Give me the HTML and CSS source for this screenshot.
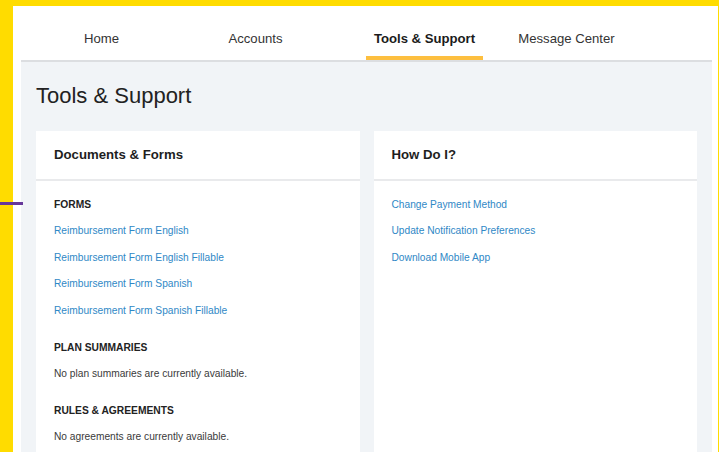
FILE: index.html
```html
<!DOCTYPE html>
<html lang="en">
<head>
<meta charset="utf-8">
<title>Tools &amp; Support</title>
<link rel="stylesheet" href="styles.css">
</head>
<body>
<span class="edge-marker"></span>
<div class="frame">
  <nav class="tabs">
    <a class="tab tab-home" href="#">Home</a>
    <a class="tab tab-accounts" href="#">Accounts</a>
    <a class="tab tab-tools is-active" href="#">Tools &amp; Support</a>
    <a class="tab tab-messages" href="#">Message Center</a>
  </nav>
  <main class="content">
    <h1 class="page-title">Tools &amp; Support</h1>
    <div class="cards">
      <section class="card">
        <h2 class="card-head">Documents &amp; Forms</h2>
        <div class="card-body">
          <div class="group">
            <h3 class="group-label">FORMS</h3>
            <ul class="list">
              <li><a href="#">Reimbursement Form English</a></li>
              <li><a href="#">Reimbursement Form English Fillable</a></li>
              <li><a href="#">Reimbursement Form Spanish</a></li>
              <li><a href="#">Reimbursement Form Spanish Fillable</a></li>
            </ul>
          </div>
          <div class="group">
            <h3 class="group-label">PLAN SUMMARIES</h3>
            <p class="note">No plan summaries are currently available.</p>
          </div>
          <div class="group">
            <h3 class="group-label">RULES &amp; AGREEMENTS</h3>
            <p class="note">No agreements are currently available.</p>
          </div>
        </div>
      </section>
      <section class="card">
        <h2 class="card-head">How Do I?</h2>
        <div class="card-body">
          <ul class="list list-plain">
            <li><a href="#">Change Payment Method</a></li>
            <li><a href="#">Update Notification Preferences</a></li>
            <li><a href="#">Download Mobile App</a></li>
          </ul>
        </div>
      </section>
    </div>
  </main>
</div>
</body>
</html>
```

FILE: styles.css
```css
* {
  box-sizing: border-box;
}

html,
body {
  margin: 0;
  padding: 0;
}

body {
  background: #ffdc00;
  font-family: "Liberation Sans", Arial, sans-serif;
  color: #333;
  height: 452px;
  overflow: hidden;
  position: relative;
}

/* small purple tick that crosses the left gutter */
.edge-marker {
  position: absolute;
  left: 0;
  top: 202px;
  width: 23px;
  height: 3px;
  background: #66379a;
  z-index: 2;
}

.frame {
  margin: 6px 1px 0 13px;
  background: #fff;
  padding: 0 6px 0 8px;
  min-height: 460px;
}

/* top navigation */
.tabs {
  display: flex;
  border-bottom: 2px solid #dcdee1;
}

.tab {
  display: block;
  width: 117px;
  text-align: center;
  padding: 24px 0 8px;
  line-height: 18px;
  font-size: 13.15px;
  color: #333;
  text-decoration: none;
  border-bottom: 4px solid transparent;
}

.tab-home { margin-left: 22px; }
.tab-accounts { margin-left: 37px; }
.tab-tools { margin-left: 52px; }
.tab-messages { margin-left: 25px; }

.tab.is-active {
  font-weight: bold;
  color: #1b1b1b;
  border-bottom-color: #fdbf3f;
}

/* page body */
.content {
  background: #f1f4f7;
  padding: 21px 15px 0;
  min-height: 400px;
}

.page-title {
  margin: 0 0 22px;
  font-size: 22px;
  line-height: 26px;
  font-weight: normal;
  color: #222;
}

.cards {
  display: grid;
  grid-template-columns: 1fr 1fr;
  gap: 14px;
}

.card {
  background: #fff;
  min-height: 340px;
}

.card-head {
  margin: 0;
  padding: 15px 18px;
  font-size: 13.2px;
  line-height: 18px;
  font-weight: bold;
  color: #1e1e1e;
  border-bottom: 2px solid #e9eaec;
}

.card-body {
  padding: 15.5px 18px;
}

.group + .group {
  margin-top: 20.5px;
}

.group-label {
  margin: 0;
  font-size: 10.25px;
  line-height: 16px;
  font-weight: bold;
  color: #222;
}

.list {
  list-style: none;
  margin: 0;
  padding: 0;
}

.list li {
  margin-top: 10.67px;
  font-size: 10.2px;
  line-height: 16px;
}

.list-plain li:first-child {
  margin-top: 0;
}

.list a {
  color: #2f88c6;
  text-decoration: none;
}

.note {
  margin: 10.67px 0 0;
  font-size: 10.2px;
  line-height: 16px;
  color: #3a3a3a;
}
```
